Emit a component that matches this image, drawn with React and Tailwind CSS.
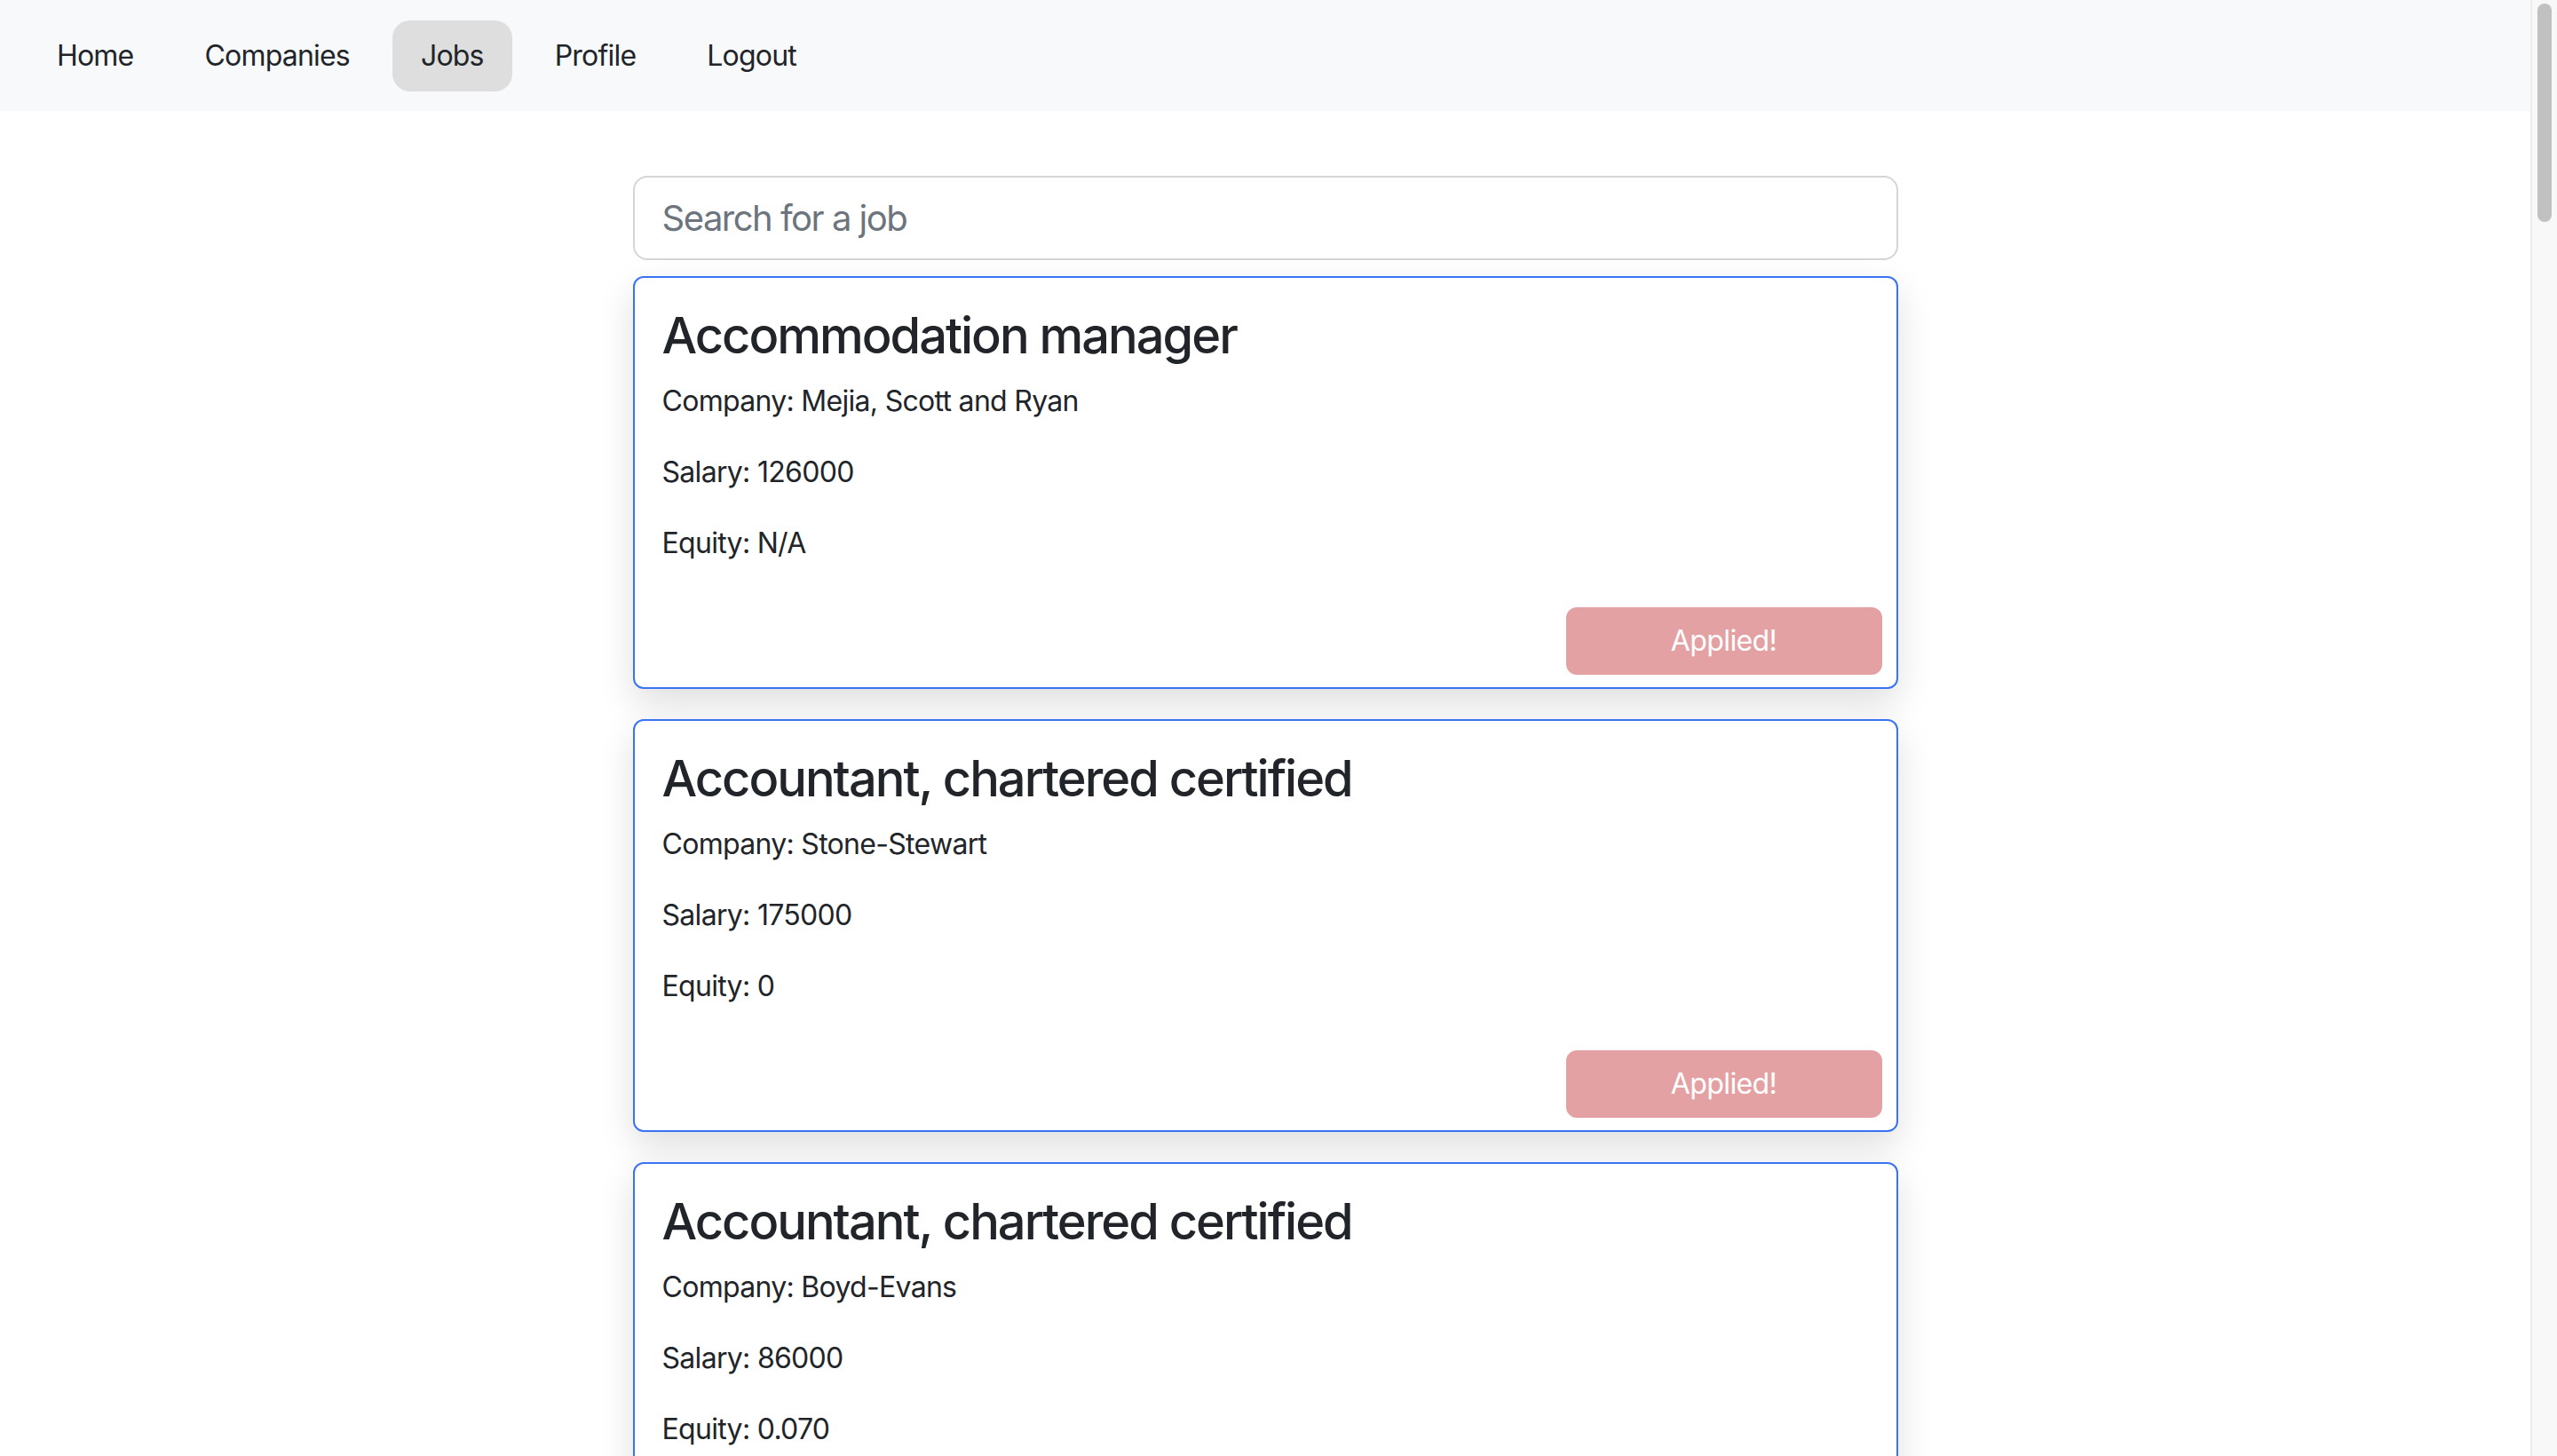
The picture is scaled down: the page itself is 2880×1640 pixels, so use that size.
import React from "react";

const navLinks = ["Home", "Companies", "Jobs", "Profile", "Logout"];

const jobs = [
  {
    title: "Accommodation manager",
    company: "Mejia, Scott and Ryan",
    salary: "126000",
    equity: "N/A",
  },
  {
    title: "Accountant, chartered certified",
    company: "Stone-Stewart",
    salary: "175000",
    equity: "0",
  },
  {
    title: "Accountant, chartered certified",
    company: "Boyd-Evans",
    salary: "86000",
    equity: "0.070",
  },
];

const JobCard = ({ job }) => (
  <div className="bg-white border-2 border-[#3a73f4] rounded-[12px] shadow-[0_16px_40px_rgba(0,0,0,0.13)] mb-[34px]">
    <div className="pt-[32px] px-[31px]">
      <h3 className="text-[56px] leading-[67px] font-medium tracking-[-2px] text-[#212529] mb-[16px]">
        {job.title}
      </h3>
      <p className="text-[32px] leading-[48px] tracking-[-0.7px] mb-[32px]">Company: {job.company}</p>
      <p className="text-[32px] leading-[48px] tracking-[-0.7px] mb-[32px]">Salary: {job.salary}</p>
      <p className="text-[32px] leading-[48px] tracking-[-0.7px] mb-[32px]">Equity: {job.equity}</p>
    </div>
    <div className="flex justify-end pt-[16px] pr-[16px] pb-[14px]">
      <button className="w-[356px] h-[76px] rounded-[12px] bg-[#e4a1a4] text-white text-[32px] tracking-[-0.6px]">
        Applied!
      </button>
    </div>
  </div>
);

const App = () => {
  return (
    <div
      className="flex h-[1640px] overflow-hidden bg-white text-[#212529]"
      style={{ fontFamily: "Inter, 'Noto Sans', sans-serif" }}
    >
      <div className="flex-1 min-w-0">
        {/* Nav */}
        <nav className="h-[125px] bg-[#f8f9fa] flex items-center gap-[16px] px-[32px]">
          {navLinks.map((link) => (
            <a
              key={link}
              className={`px-[32px] py-[16px] text-[32px] leading-[48px] tracking-[-0.8px] rounded-[20px] ${
                link === "Jobs" ? "bg-[#dedede]" : ""
              }`}
            >
              {link}
            </a>
          ))}
        </nav>

        {/* Jobs list */}
        <div className="w-[1425px] mx-auto pt-[73px]">
          <input
            type="text"
            placeholder="Search for a job"
            className="w-full h-[95px] rounded-[16px] border-2 border-[#d3d6d9] px-[31px] text-[40px] tracking-[-1.5px] placeholder:text-[#6c757d] outline-none mb-[18px]"
          />
          {jobs.map((job, index) => (
            <JobCard key={index} job={job} />
          ))}
        </div>
      </div>

      {/* Scrollbar */}
      <div className="w-[30px] bg-[#f8f8f8] border-l-2 border-[#ececec] pt-[4px] pl-[6px]">
        <div className="w-[16px] h-[246px] rounded-full bg-[#c1c1c1]" />
      </div>
    </div>
  );
};

export default App;
